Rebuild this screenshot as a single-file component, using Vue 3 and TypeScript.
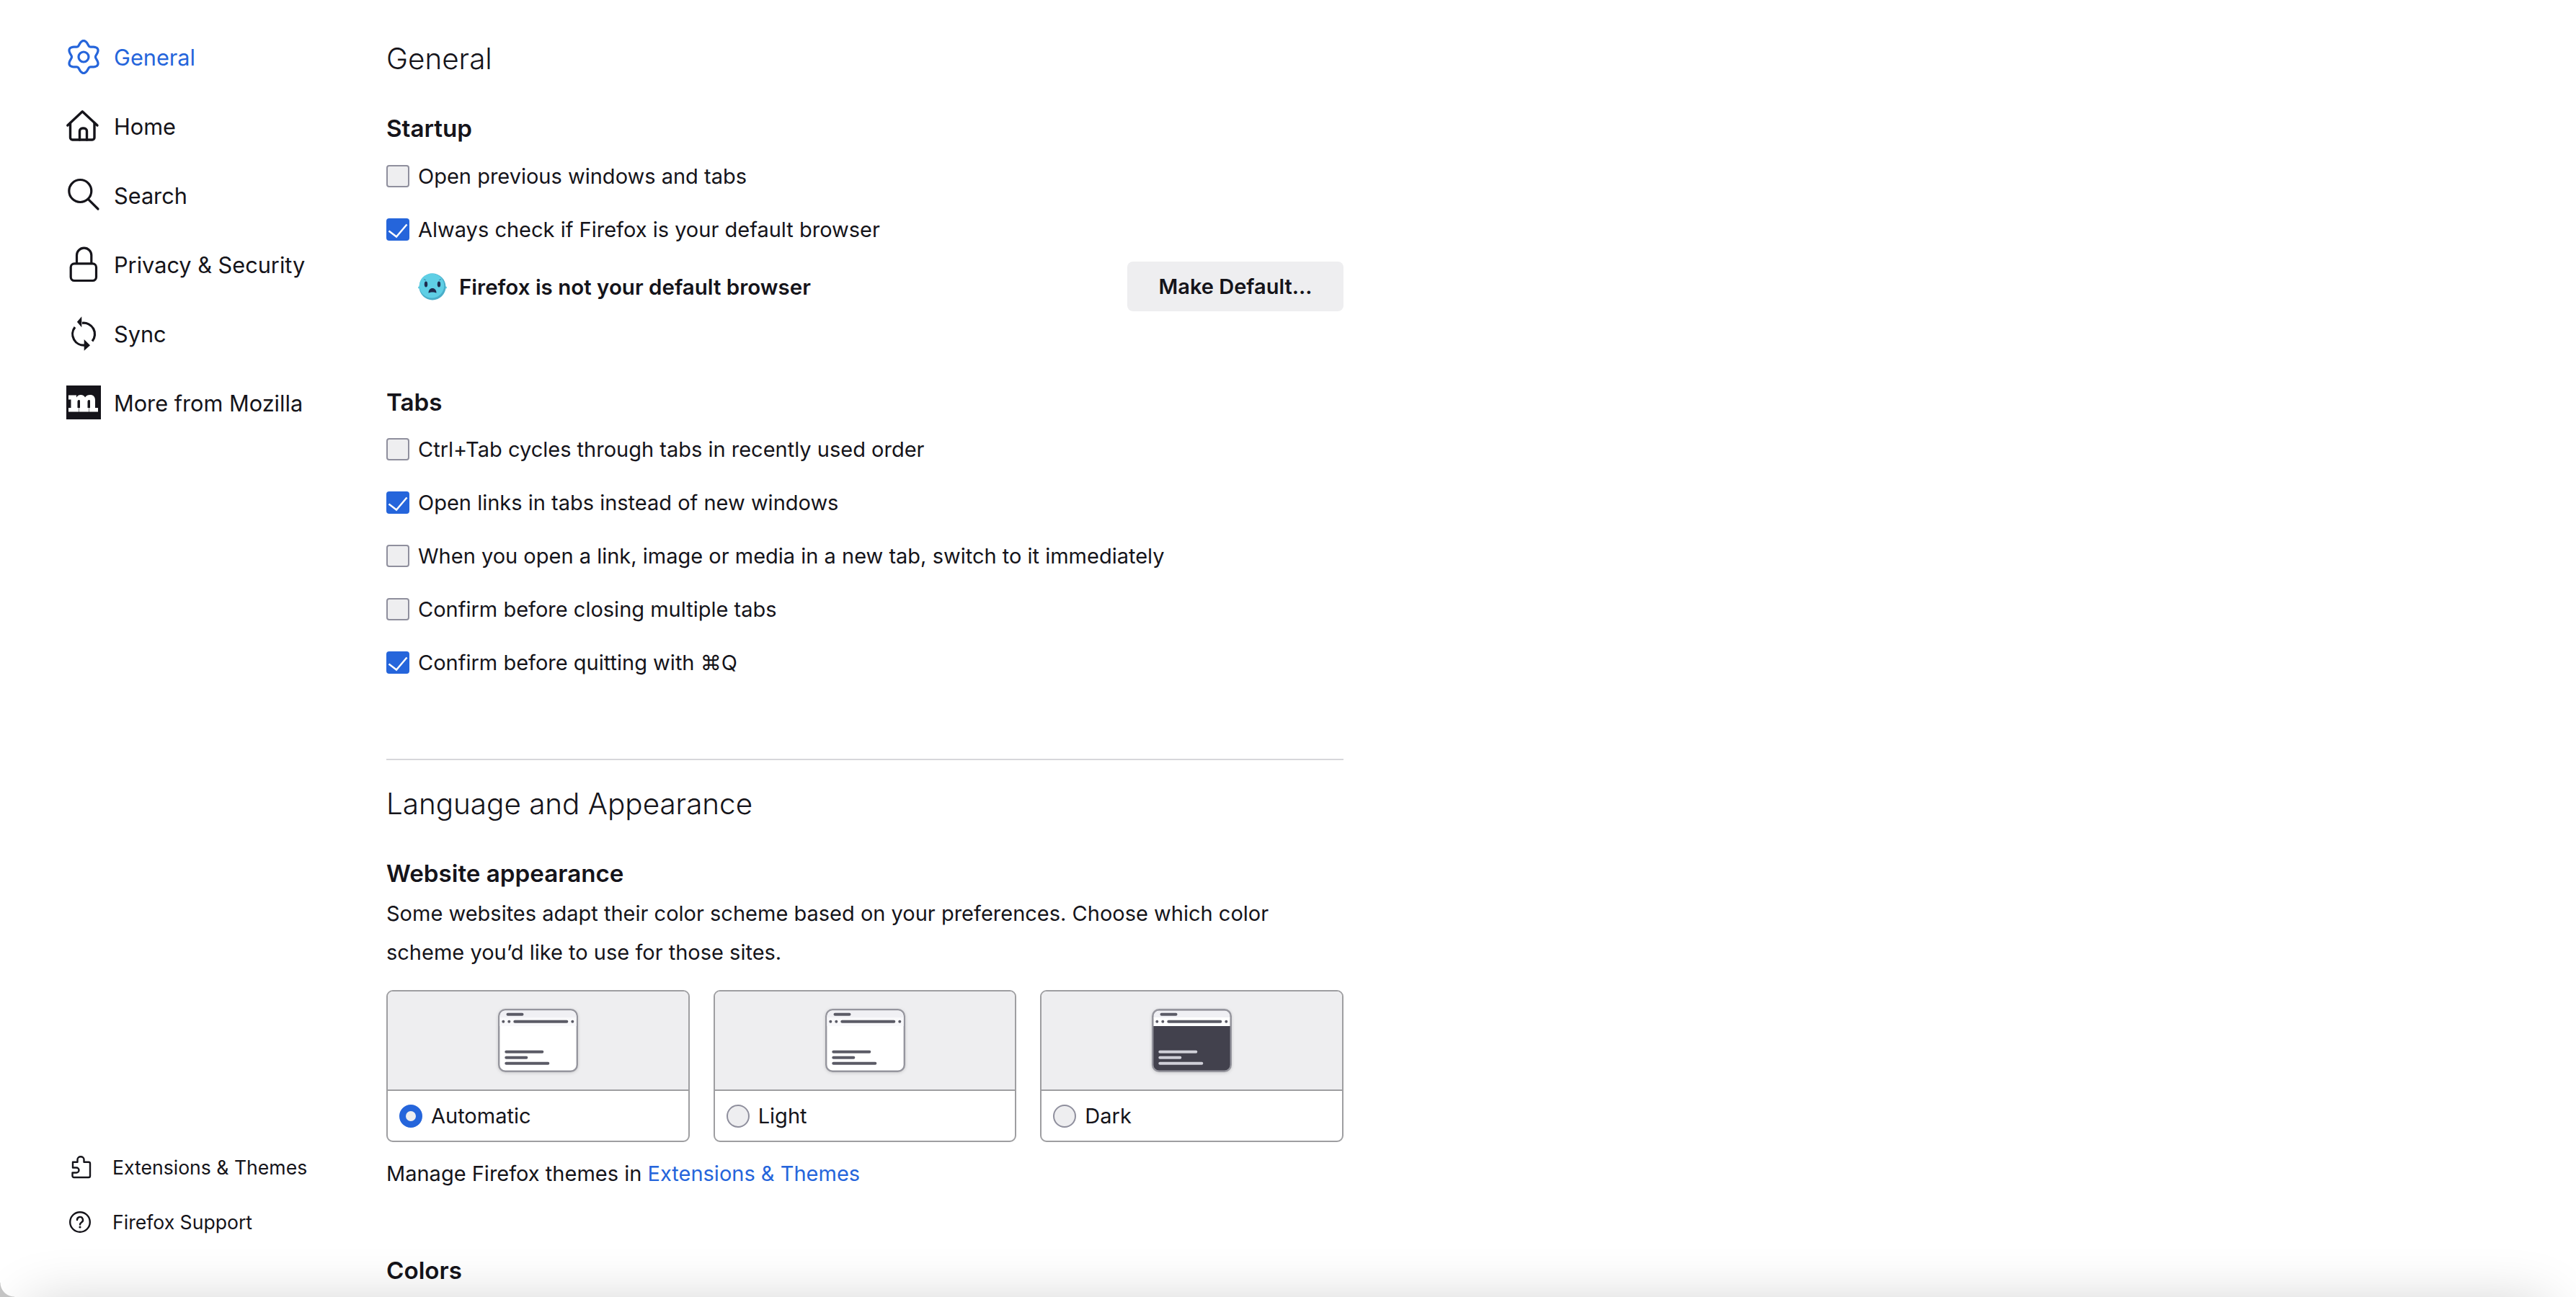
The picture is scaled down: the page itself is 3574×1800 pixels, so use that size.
<template>
  <div class="window">
    <aside class="sidebar">
      <nav class="nav">
        <a class="nav-item active">
          <svg class="nav-icon" viewBox="0 0 48 48" fill="none" stroke="currentColor" stroke-width="3.2">
            <path :d="gearPath" stroke-linejoin="round" />
            <circle cx="24" cy="24" r="7" />
          </svg>
          <span>General</span>
        </a>
        <a class="nav-item">
          <svg class="nav-icon" viewBox="0 0 48 48" fill="none" stroke="currentColor" stroke-width="3.4" stroke-linecap="round" stroke-linejoin="round">
            <path d="M1.8 23 22.3 3.8 43 23" />
            <path d="M5.5 20v20a3 3 0 0 0 3 3H36a3 3 0 0 0 3-3V20" />
            <path d="M18.5 43V31a4 4 0 0 1 4-4h2a4 4 0 0 1 4 4v12" />
          </svg>
          <span>Home</span>
        </a>
        <a class="nav-item">
          <svg class="nav-icon" viewBox="0 0 48 48" fill="none" stroke="currentColor" stroke-width="3.2" stroke-linecap="round">
            <circle cx="19.3" cy="18" r="15.5" />
            <path d="M31.3 30.3 44 43" />
          </svg>
          <span>Search</span>
        </a>
        <a class="nav-item">
          <svg class="nav-icon" viewBox="0 0 48 48" fill="none" stroke="currentColor" stroke-width="3.2">
            <rect x="6.2" y="22.8" width="35.3" height="23.7" rx="5" />
            <path d="M14.5 22V11.3a10.15 10.15 0 0 1 20.3 0V22" />
          </svg>
          <span>Privacy &amp; Security</span>
        </a>
        <a class="nav-item">
          <svg class="nav-icon" viewBox="0 0 48 48" fill="none" stroke="currentColor" stroke-width="3.2">
            <path d="M22 9.3A15.5 15.5 0 0 1 36 34.5" />
            <path d="M26 40A15.5 15.5 0 0 1 12 15" />
            <path fill="currentColor" stroke="none" d="M21.3.3v15l-6.4-7.5zM24.7 32v15.7l8.3-7.4z" />
          </svg>
          <span>Sync</span>
        </a>
        <a class="nav-item">
          <svg class="nav-icon" viewBox="0 0 48 48">
            <rect width="48" height="47" fill="#15141a" />
            <path fill="#fff" d="M3 13.5h11v3c1.500-2.500 3.500-3.500 6-3.500 3 0 5 1.200 6 3.500 1.500-2.500 4-3.500 7-3.500 4.500 0 7 2.500 7 7.500V31h4v5.500H31.500V31H33v-9c0-1.500-.5-2-1.500-2s-2 .7-2 2.500V31H31v5.500H17.500V31H19v-9c0-1.500-.5-2-1.500-2s-2 .7-2 2.500V31H17v5.500H3V31h3.500V19.500H3z" />
          </svg>
          <span>More from Mozilla</span>
        </a>
      </nav>
      <div class="foot-links">
        <a class="foot-item">
          <svg class="foot-icon" viewBox="0 0 32 32" fill="none" stroke="currentColor" stroke-width="2.4" stroke-linejoin="round">
            <path d="M5 8.7h6.5V5a4.5 3.8 0 0 1 9 0v3.7H27a2 2 0 0 1 2 2V28a2 2 0 0 1-2 2H6.5a2 2 0 0 1-2-2v-4.5H10a3.5 3.5 0 0 0 0-7H5z" />
          </svg>
          <span>Extensions &amp; Themes</span>
        </a>
        <a class="foot-item">
          <svg class="foot-icon" viewBox="0 0 32 32" fill="none" stroke="currentColor" stroke-width="2.4" stroke-linecap="round">
            <circle cx="15" cy="16" r="13.8" />
            <path d="M11 13a4 4 0 1 1 6 3.4c-1.3.8-2 1.500-2 3" />
            <circle cx="15" cy="23" r="1.6" fill="currentColor" stroke="none" />
          </svg>
          <span>Firefox Support</span>
        </a>
      </div>
    </aside>

    <main class="content">
      <h1 class="title">General</h1>

      <h2 class="heading startup">Startup</h2>
      <div class="rows">
        <label v-for="row in startupRows" :key="row.text" class="check-row">
          <span class="box" :class="{ checked: row.checked }">
            <svg v-if="row.checked" viewBox="0 0 32 31" fill="none" stroke="#fff" stroke-width="2.4">
              <path d="M3.5 17.5 14 25.5 28.5 8.5" />
            </svg>
          </span>
          {{ row.text }}
        </label>
      </div>
      <div class="default-row">
        <svg class="emoji" viewBox="0 0 40 40">
          <circle cx="1.6" cy="21" r="1.6" fill="#5dcfe3" />
          <circle cx="38.4" cy="21" r="1.6" fill="#5dcfe3" />
          <circle cx="20" cy="20" r="18.5" fill="#4aaec9" />
          <ellipse cx="19" cy="18.6" rx="17.2" ry="17" fill="#5fcfe5" />
          <ellipse cx="11" cy="16.5" rx="2.2" ry="4" fill="#1f2b4d" />
          <ellipse cx="29" cy="16.5" rx="2.2" ry="4" fill="#1f2b4d" />
          <path d="M14.5 28.5c0-4 2.5-6.500 5.500-6.500s5.500 2.500 5.500 6.500c-3-1.500-8-1.500-11 0z" fill="#1f2b4d" />
          <path d="M8 9.500 11 11M32 9.500 29 11" stroke="#3f8fb0" stroke-width="1.200" fill="none" />
        </svg>
        <strong class="default-text">Firefox is not your default browser</strong>
        <button class="make-default" type="button">Make Default...</button>
      </div>

      <h2 class="heading tabs">Tabs</h2>
      <div class="rows">
        <label v-for="row in tabRows" :key="row.text" class="check-row">
          <span class="box" :class="{ checked: row.checked }">
            <svg v-if="row.checked" viewBox="0 0 32 31" fill="none" stroke="#fff" stroke-width="2.4">
              <path d="M3.5 17.5 14 25.5 28.5 8.5" />
            </svg>
          </span>
          {{ row.text }}
        </label>
      </div>

      <hr class="divider" />

      <h1 class="title">Language and Appearance</h1>
      <h2 class="heading appearance">Website appearance</h2>
      <p class="copy">Some websites adapt their color scheme based on your preferences. Choose which color scheme you’d like to use for those sites.</p>

      <div class="themes">
        <div v-for="theme in themes" :key="theme.name" class="theme-card">
          <div class="theme-preview">
            <svg class="mini" viewBox="0 0 111 88">
              <rect x="1.200" y="1.200" width="108.600" height="85.600" rx="9" :fill="theme.dark ? '#42414d' : '#fff'" stroke="#96969e" stroke-width="2.400" />
              <path d="M2.400 12.500V10a7.600 7.600 0 0 1 7.600-7.600h91a7.600 7.600 0 0 1 7.600 7.600v2.500z" fill="#f0f0f4" />
              <rect x="2.400" y="12" width="106.200" height="12" :fill="theme.dark ? '#fff' : '#f9f9fb'" />
              <rect x="11.500" y="5.700" width="24" height="4" rx="2" fill="#5b5b66" />
              <circle cx="7.300" cy="17.700" r="2" fill="#5b5b66" />
              <circle cx="15.300" cy="17.700" r="2" fill="#5b5b66" />
              <rect x="21.300" y="15.700" width="76" height="4" rx="2" fill="#5b5b66" />
              <circle cx="103.300" cy="17.700" r="2" fill="#5b5b66" />
              <g :fill="theme.dark ? '#cfcfd8' : '#5b5b66'">
                <rect x="9.300" y="57.700" width="54" height="4" rx="2" />
                <rect x="9.300" y="65.700" width="32" height="4" rx="2" />
                <rect x="9.300" y="73.700" width="62" height="4" rx="2" />
              </g>
            </svg>
          </div>
          <label class="theme-label">
            <span class="radio" :class="{ selected: theme.selected }"></span>
            {{ theme.name }}
          </label>
        </div>
      </div>

      <p class="copy manage">Manage Firefox themes in <a class="link">Extensions &amp; Themes</a></p>

      <h2 class="heading colors">Colors</h2>
    </main>

    <div class="shade"><div class="shade-source"></div></div>
    <div class="corner"></div>
  </div>
</template>

<script setup lang="ts">
interface CheckRow {
  text: string;
  checked: boolean;
}

interface Theme {
  name: string;
  selected: boolean;
  dark: boolean;
}

const startupRows: CheckRow[] = [
  { text: 'Open previous windows and tabs', checked: false },
  { text: 'Always check if Firefox is your default browser', checked: true },
];

const tabRows: CheckRow[] = [
  { text: 'Ctrl+Tab cycles through tabs in recently used order', checked: false },
  { text: 'Open links in tabs instead of new windows', checked: true },
  { text: 'When you open a link, image or media in a new tab, switch to it immediately', checked: false },
  { text: 'Confirm before closing multiple tabs', checked: false },
  { text: 'Confirm before quitting with ⌘Q', checked: true },
];

const themes: Theme[] = [
  { name: 'Automatic', selected: true, dark: false },
  { name: 'Light', selected: false, dark: false },
  { name: 'Dark', selected: false, dark: true },
];

// wavy outline with six round lobes, one pointing straight up
function buildGear(): string {
  const pts: string[] = [];
  for (let i = 0; i < 120; i++) {
    const a = (i / 120) * Math.PI * 2;
    const r = 19.5 + 3 * Math.cos(6 * a);
    const x = 24 + r * Math.sin(a);
    const y = 24 - r * Math.cos(a);
    pts.push(`${x.toFixed(2)} ${y.toFixed(2)}`);
  }
  return `M${pts.join('L')}Z`;
}

const gearPath = buildGear();
</script>

<style>
html,
body {
  margin: 0;
  background: #fff;
  overflow: hidden;
}
</style>

<style scoped>
.window {
  position: relative;
  display: flex;
  width: 3574px;
  height: 1800px;
  overflow: hidden;
  background: #fff;
  color: #15141a;
  font-family: Inter, "Liberation Sans", sans-serif;
  font-size: 29px;
}

.sidebar {
  width: 536px;
  height: 1800px;
  flex: none;
  box-sizing: border-box;
  padding: 31px 0 66px 92px;
  display: flex;
  flex-direction: column;
  justify-content: space-between;
}

.nav-item {
  height: 96px;
  display: flex;
  align-items: center;
  gap: 18px;
  font-size: 30.7px;
}

.nav-item.active {
  color: #2565db;
}

.nav-icon {
  width: 48px;
  height: 48px;
  flex: none;
  overflow: visible;
}

.foot-item {
  height: 76px;
  display: flex;
  align-items: center;
  gap: 28px;
  margin-left: 4px;
  font-size: 26.6px;
}

.foot-icon {
  width: 32px;
  height: 32px;
  flex: none;
}

.content {
  width: 1328px;
  flex: none;
  padding-top: 52px;
}

.title {
  margin: 0;
  height: 60px;
  line-height: 60px;
  font-size: 40.4px;
  font-weight: 300;
}

.heading {
  margin: 0;
  height: 44px;
  line-height: 44px;
  font-size: 33.2px;
  font-weight: 600;
}

.startup {
  margin-top: 44px;
}

.tabs {
  margin-top: 104px;
}

.appearance {
  margin-top: 44px;
}

.colors {
  margin-top: 85px;
}

.rows {
  margin-top: 7px;
}

.tabs + .rows {
  margin-top: 6px;
}

.check-row {
  height: 74px;
  display: flex;
  align-items: center;
  gap: 12px;
}

.box {
  width: 32px;
  height: 31px;
  flex: none;
  box-sizing: border-box;
  border: 2px solid #8f8f9d;
  border-radius: 4px;
  background: #eeeef0;
}

.box.checked {
  border: none;
  background: #2565db;
}

.box svg {
  display: block;
  width: 32px;
  height: 31px;
}

.default-row {
  margin-top: 8px;
  height: 69px;
  display: flex;
  align-items: center;
  padding-left: 44px;
}

.emoji {
  width: 40px;
  height: 40px;
  flex: none;
}

.default-text {
  margin-left: 17px;
  font-size: 29.5px;
  font-weight: 600;
}

.make-default {
  margin-left: auto;
  width: 300px;
  height: 69px;
  border: none;
  border-radius: 8px;
  background: #eeeef0;
  color: #15141a;
  font: 600 29px Inter, "Liberation Sans", sans-serif;
}

.divider {
  margin: 97px 0 31px;
  height: 2px;
  border: none;
  background: #d7d7db;
}

.copy {
  margin: 7px 0 0;
  line-height: 54px;
}

.themes {
  margin-top: 25px;
  display: flex;
  gap: 33px;
}

.theme-card {
  width: 421px;
  height: 211px;
  box-sizing: border-box;
  border: 2px solid #9e9ea1;
  border-radius: 9px;
  overflow: hidden;
  display: flex;
  flex-direction: column;
}

.theme-preview {
  height: 112px;
  flex: none;
  background: #eeeef0;
  border-bottom: 2px solid #9e9ea1;
  display: flex;
  justify-content: center;
  padding-top: 24px;
}

.mini {
  width: 111px;
  height: 88px;
  filter: drop-shadow(0 1px 2px rgba(0, 0, 0, 0.15));
}

.theme-label {
  flex: 1;
  display: flex;
  align-items: center;
  gap: 12px;
  padding-left: 16px;
}

.radio {
  width: 32px;
  height: 32px;
  flex: none;
  box-sizing: border-box;
  border: 2px solid #8f8f9d;
  border-radius: 50%;
  background: #eeeef0;
}

.radio.selected {
  border: 9px solid #2565db;
}

.manage {
  margin-top: 17px;
}

.link {
  color: #2565db;
}

.shade {
  position: absolute;
  left: 0;
  right: 0;
  bottom: 0;
  height: 140px;
  overflow: hidden;
  pointer-events: none;
}

.shade-source {
  position: absolute;
  left: 60px;
  right: 60px;
  top: 170px;
  height: 100px;
  box-shadow: 0 0 80px 20px rgba(0, 0, 0, 0.2);
}

.corner {
  position: absolute;
  left: 0;
  bottom: 0;
  width: 20px;
  height: 20px;
  background: radial-gradient(circle at 100% 0, transparent 19px, #c4c4c4 20px);
  pointer-events: none;
}
</style>
